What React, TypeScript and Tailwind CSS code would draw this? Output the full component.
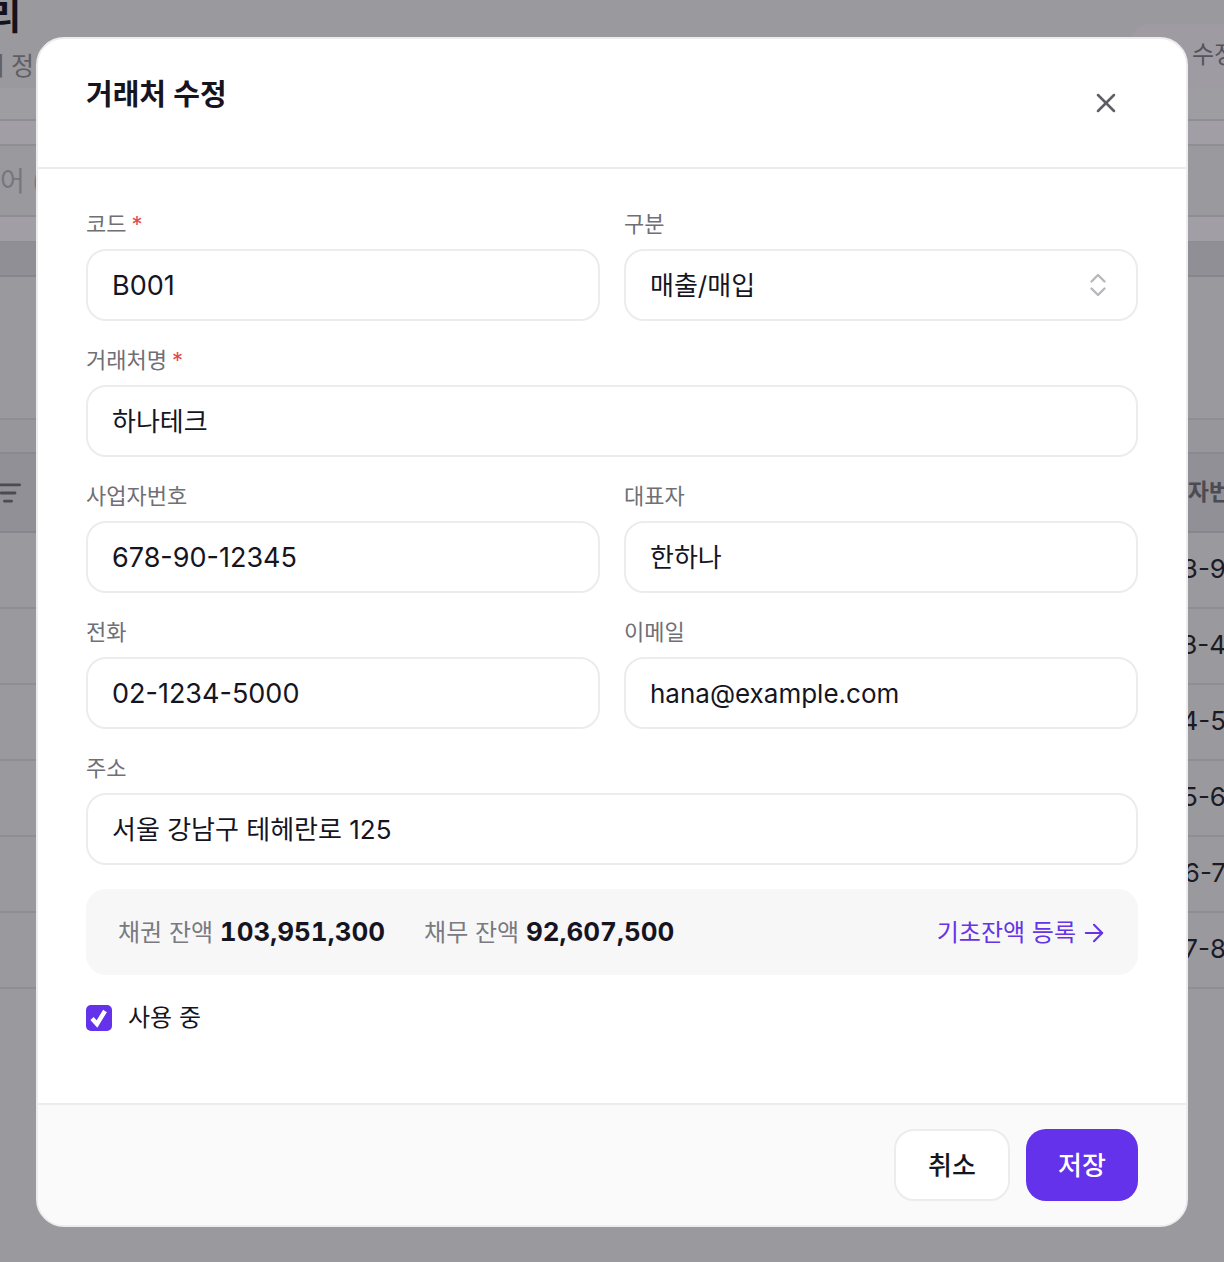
import { ArrowRight, ListFilter, X } from "lucide-react";

const FONT = "font-['Inter','Noto_Sans_CJK_KR',sans-serif]";

function Label({ text, required }: { text: string; required?: boolean }) {
  return (
    <label className="mb-3 flex h-7 items-center gap-[5px] pt-[2px] text-[22px] leading-7 text-[#6f6f76]">
      {text}
      {required && <span className="text-[22px] text-[#e5484d]">*</span>}
    </label>
  );
}

function Field({
  label,
  value,
  required,
  numeric,
  className,
}: {
  label: string;
  value: string;
  required?: boolean;
  numeric?: boolean;
  className?: string;
}) {
  return (
    <div className={className}>
      <Label text={label} required={required} />
      <div
        className={`flex h-[72px] items-center rounded-[20px] border-2 border-[#ececee] bg-white px-[24px] text-[#16151f] ${
          numeric ? "pt-0.5 text-[27px]" : "text-[26px]"
        }`}
      >
        {value}
      </div>
    </div>
  );
}

const backgroundRows = ["3-9", "3-4", "4-5", "5-6", "6-7", "7-8"];

function BackgroundPage() {
  return (
    <div className="min-h-[1262px] overflow-hidden bg-[#9a999e] text-[#14131d]">
      <div className="h-[88px] overflow-hidden">
        <div className="flex h-[88px] justify-between">
          <div className="overflow-hidden">
            <div className="-ml-[12px] -mt-[4px] h-[42px] text-[36px] font-bold leading-[42px]">리</div>
            <div className="-ml-[18px] mt-[12px] flex gap-[6px] text-[25px] leading-8 text-[#5f5e66]">
              <span>처</span>
              <span>정</span>
            </div>
          </div>
          <div className="mt-6 h-[64px] w-[94px] rounded-tl-[20px] bg-[#9e9ca2] pl-[62px] pt-[15px] text-[24px] leading-8 whitespace-nowrap text-[#55545c]">
            수정
          </div>
        </div>
      </div>
      <div className="h-[33px] border-b-2 border-[#8f8e94] bg-[#9e9da2]" />
      <div className="h-[25px] border-b-2 border-[#8f8e94] bg-[#a19fa5]" />
      <div className="flex h-[71px] items-center gap-[7px] border-b-2 border-[#8f8e94] pt-[4px] text-[27px] text-[#77767c]">
        <span>어</span>
        <span>(</span>
      </div>
      <div className="h-[26px] border-b-2 border-[#8f8e94] bg-[#a19fa5]" />
      <div className="h-[34px] border-b-2 border-[#87868c] bg-[#908f95]" />
      <div className="h-[143px] border-b-2 border-[#8f8e94]" />
      <div className="h-[34px] border-b-2 border-[#8a898f] bg-[#97969b]" />
      <div className="flex h-[79px] items-center justify-between border-b-2 border-[#87868c] bg-[#919096]">
        <ListFilter className="-ml-[6px] h-7 w-7 text-[#4c4b52]" strokeWidth={2.4} />
        <span className="-mr-[6px] text-[23px] font-semibold text-[#4c4b52]">사업자번</span>
      </div>
      {backgroundRows.map((row) => (
        <div key={row} className="flex h-[76px] items-center justify-end border-b-2 border-[#8f8e94] pb-1 text-[26px] text-[#1c1b24]">
          <span className="-mr-[2px]">{row}</span>
        </div>
      ))}
    </div>
  );
}

export default function App() {
  return (
    <div className={`relative h-[1262px] w-[1224px] overflow-hidden ${FONT}`}>
      <BackgroundPage />

      <div className="absolute left-[36px] top-[37px] flex h-[1190px] w-[1152px] flex-col overflow-hidden rounded-[28px] border-2 border-[#ececee] bg-white">
        <div className="flex h-[130px] shrink-0 justify-between border-b-2 border-[#ececee] pl-[48px] pr-[64px]">
          <h2 className="pt-[36px] text-[29px] leading-[40px] font-semibold text-[#16151f]">거래처 수정</h2>
          <X className="mt-[48px] h-8 w-8 text-[#5d5d63]" strokeWidth={1.9} />
        </div>

        <div className="flex-1 px-[48px] pt-[40px]">
          <div className="grid grid-cols-2 gap-x-6 gap-y-6">
            <Field label="코드" value="B001" required numeric />
            <div>
              <Label text="구분" />
              <div className="flex h-[72px] items-center justify-between rounded-[20px] border-2 border-[#ececee] bg-white pl-[24px] pr-[28px] text-[26px] text-[#16151f]">
                매출/매입
                <svg className="h-7 w-5 text-[#b7b7bc]" viewBox="0 0 20 28" fill="none" stroke="currentColor" strokeWidth="2.4" strokeLinecap="round" strokeLinejoin="round">
                  <path d="M3.5 10.5 10 4l6.5 6.5" />
                  <path d="M3.5 17.5 10 24l6.5-6.5" />
                </svg>
              </div>
            </div>
            <Field label="거래처명" value="하나테크" required className="col-span-2" />
            <Field label="사업자번호" value="678-90-12345" numeric />
            <Field label="대표자" value="한하나" />
            <Field label="전화" value="02-1234-5000" numeric />
            <Field label="이메일" value="hana@example.com" />
            <Field label="주소" value="서울 강남구 테헤란로 125" className="col-span-2" />
          </div>

          <div className="mt-6 flex h-[86px] items-center justify-between rounded-[20px] bg-[#f7f7f8] pl-[32px] pr-[30px]">
            <div className="flex items-center gap-[39px] pb-0.5 text-[24px] text-[#7a7a80]">
              <span>
                채권 잔액 <b className="text-[26px] font-bold text-[#16151f] tabular-nums">103,951,300</b>
              </span>
              <span>
                채무 잔액 <b className="text-[26px] font-bold text-[#16151f] tabular-nums">92,607,500</b>
              </span>
            </div>
            <div className="flex items-center gap-1 pt-px text-[24px] text-[#6534e6]">
              기초잔액 등록
              <ArrowRight className="h-7 w-7" strokeWidth={1.8} />
            </div>
          </div>

          <div className="mt-[30px] flex h-[26px] items-center gap-4 text-[24px] text-[#16151f]">
            <span className="flex h-[26px] w-[26px] items-center justify-center rounded-[5px] bg-[#6332ea]">
              <svg className="h-[20px] w-[20px] text-white" viewBox="0 0 20 20" fill="none" stroke="currentColor" strokeWidth="4.4" strokeLinejoin="miter">
                <path d="M3 10.5 8 16 16 3" />
              </svg>
            </span>
            사용 중
          </div>
        </div>

        <div className="flex h-[122px] shrink-0 justify-end gap-4 border-t-2 border-[#ececee] bg-[#fafafa] px-[48px] pt-[24px]">
          <button className="h-[72px] w-[116px] rounded-[20px] border-2 border-[#ececee] bg-white text-[26px] font-medium text-[#16151f]">
            취소
          </button>
          <button className="h-[72px] w-[112px] rounded-[20px] bg-[#6332ea] text-[26px] font-medium text-white">
            저장
          </button>
        </div>
      </div>
    </div>
  );
}
